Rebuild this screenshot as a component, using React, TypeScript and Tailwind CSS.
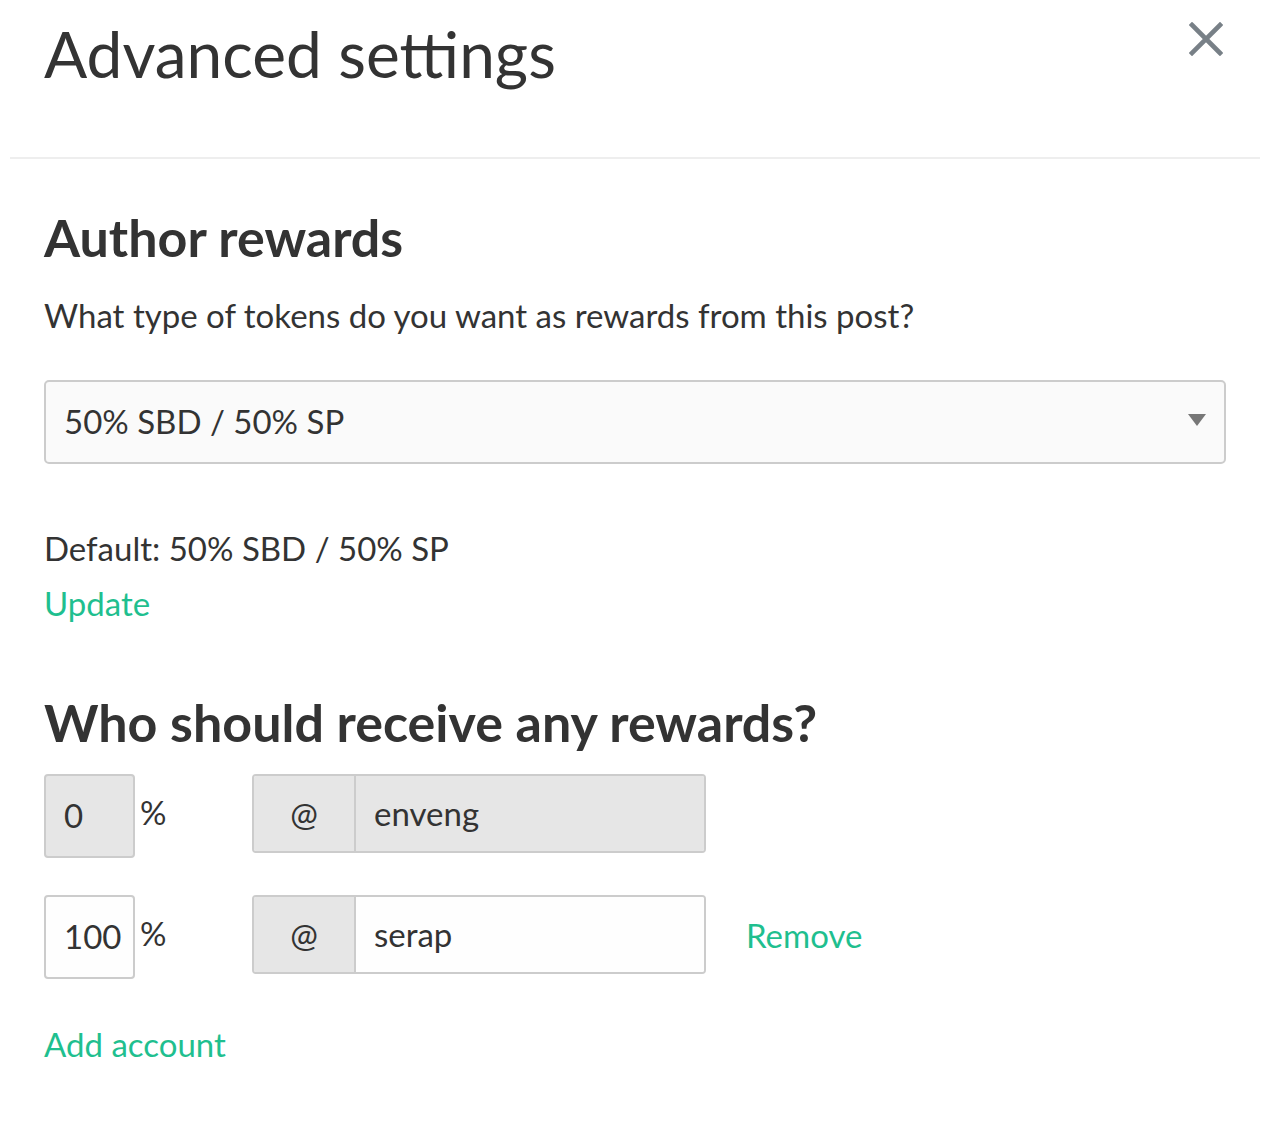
import React from "react";

const font = { fontFamily: "Lato, 'Liberation Sans', sans-serif" };

export default function App() {
  return (
    <div className="w-[1275px] h-[1124px] bg-white pl-[10px] pr-[15px] text-[#333333]" style={font}>
      <div className="flex justify-between items-start pl-[34px] pr-[37px] pt-[22px]">
        <h1 className="text-[64px] leading-[64px] font-normal">Advanced settings</h1>
        <button className="mt-[0px] w-[34px] h-[34px]" aria-label="close">
          <svg width="34" height="34" viewBox="0 0 34 34">
            <path d="M3 3 L31 31 M31 3 L3 31" stroke="#788087" strokeWidth="4.6" strokeLinecap="square" />
          </svg>
        </button>
      </div>
      <div className="mt-[71px] h-[2px] bg-[#eeeeee]" />
      <div className="px-[34px]">
        <h2 className="mt-[52px] text-[52px] leading-[52px] font-bold">Author rewards</h2>
        <p className="mt-[36px] text-[33px] leading-[33px]">What type of tokens do you want as rewards from this post?</p>
        <div className="mt-[48px] h-[84px] w-[1182px] rounded-[5px] border-2 border-[#cccccc] bg-[#fafafa] flex items-center justify-between pl-[18px] pr-[18px]">
          <span className="text-[33px]">50% SBD / 50% SP</span>
          <svg width="18" height="12" viewBox="0 0 18 12" className="mt-[-4px]">
            <path d="M0 0 H18 L9 12 Z" fill="#777777" />
          </svg>
        </div>
        <div className="mt-[57px] text-[33px] leading-[55px]">
          <div>Default: 50% SBD / 50% SP</div>
          <div className="text-[#1fbf8f]">Update</div>
        </div>
        <h2 className="mt-[65px] text-[52px] leading-[52px] font-bold">Who should receive any rewards?</h2>
        <div className="mt-[26px] flex items-start">
          <div className="w-[91px] h-[84px] rounded-[4px] border-2 border-[#cccccc] bg-[#e6e6e6] flex items-center pl-[18px] text-[33px]">0</div>
          <span className="ml-[5px] mt-[18px] text-[33px] leading-[40px] w-[112px]">%</span>
          <div className="w-[454px] h-[79px] rounded-[4px] border-2 border-[#cccccc] flex overflow-hidden text-[33px]">
            <div className="w-[102px] bg-[#e6e6e6] border-r-2 border-[#cccccc] flex items-center justify-center">@</div>
            <div className="flex-1 bg-[#e6e6e6] flex items-center pl-[18px]">enveng</div>
          </div>
        </div>
        <div className="mt-[37px] flex items-start">
          <div className="w-[91px] h-[84px] rounded-[4px] border-2 border-[#cccccc] bg-[#fefefe] flex items-center pl-[18px] text-[33px]">100</div>
          <span className="ml-[5px] mt-[18px] text-[33px] leading-[40px] w-[112px]">%</span>
          <div className="w-[454px] h-[79px] rounded-[4px] border-2 border-[#cccccc] flex overflow-hidden text-[33px]">
            <div className="w-[102px] bg-[#e6e6e6] border-r-2 border-[#cccccc] flex items-center justify-center">@</div>
            <div className="flex-1 bg-[#fefefe] flex items-center pl-[18px]">serap</div>
          </div>
          <span className="ml-[40px] mt-[-3px] self-center text-[33px] text-[#1fbf8f]">Remove</span>
        </div>
        <div className="mt-[38px] text-[33px] leading-[55px] text-[#1fbf8f]">Add account</div>
      </div>
    </div>
  );
}
